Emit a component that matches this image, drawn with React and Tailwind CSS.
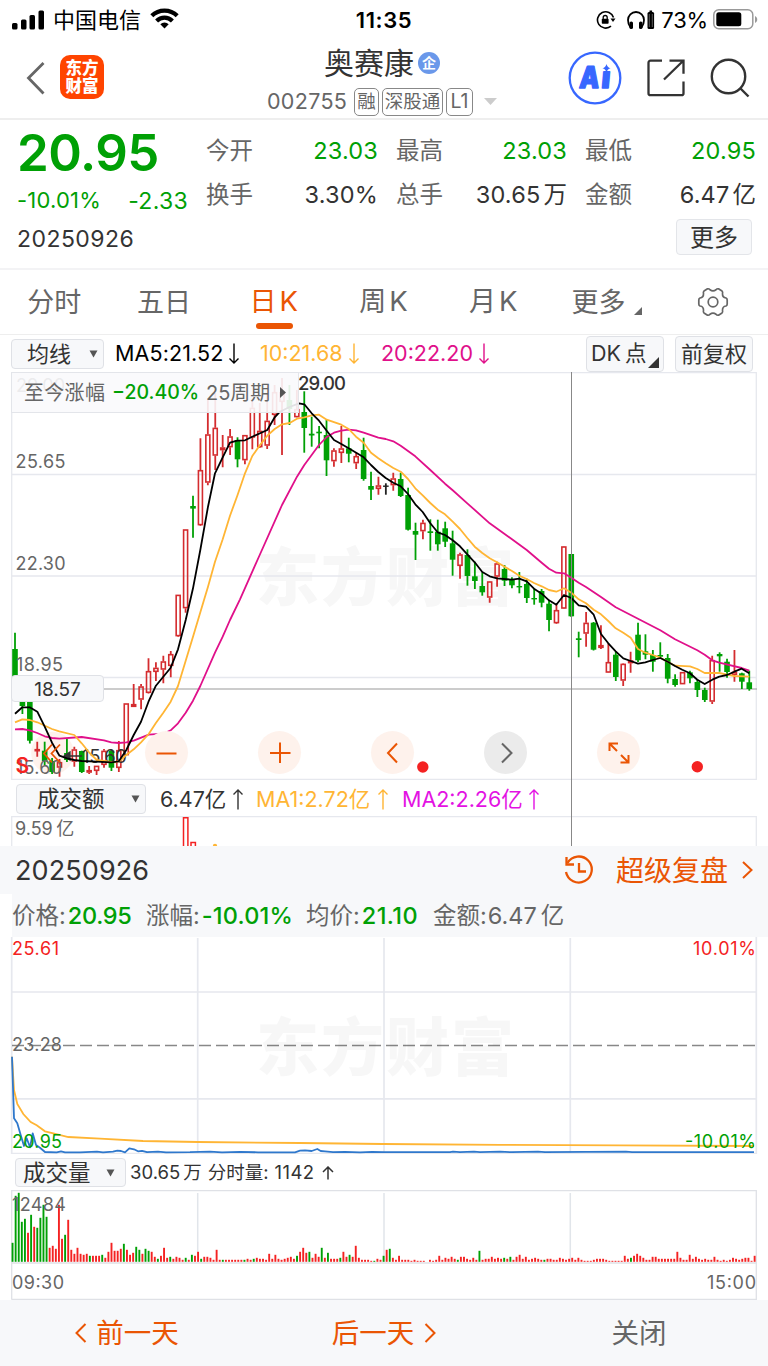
import React from 'react';

// [dir, high, bodyTop, bodyBottom, low]
const candles = [
  ['g', 632.7, 649, 680, 682], ['g', 690, 692, 706, 714], ['g', 690, 695, 740.7, 743.5], ['r', 741.7, 749, 751, 756.7],
  ['g', 741.7, 750.7, 761, 765], ['g', 758, 761, 772, 774], ['r', 759, 762, 767.7, 776.7], ['g', 739, 753, 760, 762],
  ['r', 746.7, 749.3, 761.7, 766.7], ['g', 750.7, 751, 772, 773], ['r', 766, 770, 772.7, 774], ['r', 765.7, 765.7, 771, 775],
  ['r', 749, 750.7, 765, 767.7], ['g', 749.5, 750.7, 767.7, 771], ['r', 741, 750, 768, 772], ['r', 703.3, 703.3, 755.3, 755.3],
  ['r', 684, 704, 707, 707], ['r', 684, 686.3, 699.7, 709.3], ['r', 658.3, 671, 693, 693.5], ['r', 662.3, 667.7, 672, 681],
  ['r', 655.7, 661.3, 669.7, 683.3], ['r', 651, 654, 666, 677.3], ['r', 594.7, 594.7, 636.3, 637], ['r', 529.3, 529.3, 608.3, 612.7],
  ['g', 495.7, 506, 508.6, 537.7], ['r', 438.3, 470, 525.3, 526], ['r', 398, 434.3, 482.7, 485.3], ['r', 393, 427.7, 455.7, 470],
  ['r', 435, 447.3, 450.3, 467.3], ['r', 429, 436.3, 447.3, 455], ['g', 437.3, 440, 459.3, 467.3], ['r', 435, 435, 460.3, 464.3],
  ['r', 400, 407.7, 437.7, 449.3], ['r', 403, 430.7, 447.3, 448], ['r', 393, 420.7, 445.7, 449], ['r', 385, 392, 415, 425],
  ['r', 378, 392, 402, 455], ['g', 385, 400, 409, 425], ['r', 390, 409, 417.3, 417.5], ['g', 391.3, 412, 428, 452.7],
  ['g', 416.7, 433.7, 435.5, 446.7], ['g', 426, 431.7, 433.3, 448.3], ['g', 420, 435, 460.3, 476], ['r', 448.3, 450.3, 461.3, 466.7],
  ['r', 426, 448.3, 453, 463], ['g', 437.7, 448.3, 453.7, 462.3], ['r', 452.3, 456, 463.3, 469], ['g', 437.7, 450, 479, 480.7],
  ['g', 471.7, 486, 489.7, 500], ['r', 476.7, 485.3, 489, 494.7], ['k', 483.3, 485.5, 486.5, 494.7], ['r', 472.7, 478.3, 485.3, 490.7],
  ['g', 472.7, 479, 496, 497], ['g', 487.7, 495, 529.7, 530.5], ['g', 522.7, 531, 534.7, 560], ['r', 519.7, 522.7, 531.3, 539.3],
  ['g', 519.3, 531.3, 533, 550.7], ['g', 519.7, 531.7, 544.3, 550.7], ['g', 521.7, 528.3, 541.7, 547], ['g', 530.7, 543.3, 559.7, 575.7],
  ['r', 552.7, 554.3, 566, 578.7], ['g', 549.3, 555, 576, 585.7], ['g', 561.7, 576.3, 581, 589], ['g', 572.3, 586, 592.3, 595.7],
  ['r', 581, 581.3, 597.7, 602.7], ['r', 561.7, 563.3, 576.7, 586.7], ['g', 565, 569, 580.7, 586], ['g', 577.3, 579.7, 585.3, 588.3],
  ['g', 572, 586, 587.3, 593.3], ['g', 578.7, 584, 598, 603], ['g', 588.3, 598, 599.3, 604.7], ['g', 589, 591, 602.7, 607.3],
  ['g', 600, 603.7, 620, 631.3], ['r', 604, 610, 623.3, 624], ['r', 546, 546.3, 608.7, 609], ['g', 554, 554, 616.3, 617],
  ['g', 631.7, 638.3, 640, 657.3], ['r', 612, 622.7, 633.7, 646.7], ['g', 622, 622.7, 649.7, 650.5], ['r', 625.3, 645, 648, 649],
  ['r', 643.3, 662, 672.7, 673], ['g', 651.7, 654.7, 677, 681], ['r', 663.3, 663.7, 680.7, 686], ['r', 651.7, 660.3, 663.3, 672.7],
  ['g', 622.7, 634.7, 660.3, 662], ['g', 634.3, 651.3, 654.7, 659.3], ['g', 650, 655, 661.7, 671.7], ['g', 642.3, 655, 656.7, 658],
  ['g', 654, 658, 678.7, 683.3], ['g', 674.3, 679, 685, 686.7], ['r', 672, 672, 684.3, 684.3], ['g', 670.7, 672.3, 678.3, 683.3],
  ['g', 679.3, 682, 690, 697], ['g', 687.7, 690, 700, 702], ['r', 655.7, 660, 701.7, 704], ['g', 652.3, 654, 656.3, 671.7],
  ['g', 658.7, 661.7, 672, 677.7], ['r', 650, 671.7, 675, 681.7], ['g', 672.7, 673.3, 681.7, 689], ['g', 670.7, 682.3, 689, 690.7],
];

const ma5 = '15,713.7 22.3,707.3 29.7,707.3 37.3,711.7 44.7,726.7 52,742.7 59.5,755.7 67,758.3 74.3,760 81.7,761 96.7,761.7 111.3,762.3 118.8,761.3 126.3,750 133.7,735 141,721.7 148.5,701.7 155.9,685.7 163.3,676.7 170.7,667.7 178,649.3 185.7,620 193,588.3 200.3,550 208,506.7 215,473.3 222.7,457.3 230,442.7 237.3,440.7 245,440.3 252.3,436.7 267.3,430 274.7,417.3 280,411.7 289.5,407 299,403.3 304.3,404.3 311.7,413.3 319,420.7 326.7,430.7 334,440 341.3,444 348.7,448.3 363.7,457.3 371,465 378.3,472 385.7,478 393.3,482.7 400.7,486.3 408,494 415.3,504.3 422.7,512 430.3,523.3 437.7,532.3 445,535 452.7,540.3 460,546.3 467.3,554.3 474.7,562.3 482.3,572 489.7,576.3 497,578.3 512,579.7 519.3,578.7 526.7,581.3 534,588.7 541.7,593.7 549,600.3 556.3,604.7 564,595 571.3,598 578.7,605.3 586,606.7 593.7,614.7 601,634 608.3,643.3 615.7,651.3 623.3,658.3 630.7,661 638,663.7 645.3,662.3 652.7,660 660.3,658 667.7,661.7 675,666 682.3,669.7 690,673.3 697.3,679.7 704.7,684 712.3,679.7 719.3,676.7 727,675 734.3,671.7 741.7,668.7 749.3,673.3';
const ma10 = '15,722.3 22.3,719.3 29.7,720 37.3,722.3 52,729 59.3,731.3 74.3,735 81.7,743.3 89,752.3 96.7,760 104,761 115,762.3 120,760.7 126.3,755 133.7,749.3 141,742.3 148.7,734 155.7,723.3 163.3,712.7 170.7,701.7 178,686 185.7,660.7 193,636.7 204,600 208,586.7 215,561.7 222.7,539.3 230,515.7 237.3,495.7 245,473.3 252.3,456 260,445 267.3,435.7 274.7,429 282,424.3 289.7,423 297,418.7 304.3,417.3 311.7,415.3 319,414.7 326.7,419.7 341.3,424.7 348.7,429 356,436.7 363.7,442.7 371,452.7 378.3,458.3 385.7,463.3 393.3,468 400.7,471.7 408,479 415.3,488.3 422.7,495.3 430.3,503 437.7,509.7 445,514.3 452.7,521.7 460,529 467.3,538 474.7,546.7 482.3,553 489.7,558.3 497,562.3 512,571 519.3,575.7 526.7,579 534,583 541.7,586.3 549,590 556.3,591.7 564,588.3 571.3,592.7 578.7,599.3 586,603.3 593.7,609.7 601,614.3 608.3,621 615.7,628.3 623.3,632.7 630.7,637.7 638,649 645.3,652.7 652.7,655 660.3,657.7 667.7,661.7 675,665.7 690,666.3 697.3,669 704.7,673 719.3,673 727,674.7 734.3,676 749.3,676.7';
const ma20 = '15,729.3 22.3,729 29.7,730.3 37.3,733 44.7,736.3 52,738 59.3,738.7 81.7,737 104,740.3 111.3,742.3 118.7,743 126.3,742.3 133.7,740.7 148.7,734.7 163.3,733.7 170.7,730.3 178,723.3 185.7,712.7 193,700.7 200.3,686 215,652.7 222.7,636.7 230,620 240,599.3 259.7,555 282,505 297,476.7 304.3,465 319,445 326.7,437 334,432.7 341.3,430.7 348.7,429.7 356,430.3 363.7,432.7 378.3,437.7 385.7,439 393.3,441.3 400.7,445.7 415.3,456.3 430.3,470 445,483.7 452.7,490.3 467.3,503.3 489.7,523.3 512,539.3 526.7,550 541.7,562.7 549,568.7 556.3,572.7 564,573.3 571.3,577.7 578.7,582.7 586,587 601,597 615.7,607.3 638,618.7 660.3,630.3 675,639.3 697.3,650.3 704.7,654.7 712.3,660.3 719.3,662.7 741.7,668 749.3,670.7';

const priceLine = '12,1056.7 14,1118.3 17.3,1123.3 20.7,1135 24,1146 26.7,1138.3 30,1147.3 32.7,1133.3 36,1145 40,1147.7 45,1152 56.7,1152.3 61,1151.3 65,1152.3 80,1152.3 97,1151.7 103,1152.3 113,1151.7 117.3,1150.7 121,1151 125,1152.3 129.3,1148.3 134,1149.3 138,1151.3 142,1150.8 147,1152.2 158,1151.6 166,1152.3 190,1152.2 210,1151.6 222,1152.3 240,1151.8 258,1152.3 295,1152.3 300,1150.7 305,1150.3 311.7,1151 317.3,1149 320.7,1151 325,1151.3 333,1152.2 345,1151.8 360,1152.3 372,1151.9 384,1152.2 450,1152.2 453,1151.6 460,1152.2 474,1151.7 480,1152.2 500,1151.7 512,1152.2 538,1151.6 545,1152.2 626,1151.7 632,1152.2 754,1152.2';
const avgLine = '12,1056.7 14,1090 17.3,1104 23.3,1114 30.7,1122 36.7,1125.3 45,1131.3 53.3,1133.3 68.3,1137 100,1138.7 143,1141 197.7,1142 300,1143 383,1144 500,1144.8 620,1145.3 754,1146';

// per-minute volume, negative = down tick
const volumes = [
  -19, -66, -69, -40, -43, 29, -47, 35, -34, -44, -57, -45, 14, 16, 13, 57, 23, -27, 42, 12,
  8, 14, 8, 7, 8, -6, 6, 6, 6, -7, 4, 10, 19, 11, 11, 13, -18, 12, 7, 9,
  -15, -12, 8, -13, -11, 10, 5, -3, 6, 14, 4, -5, 3, 5, 4, 2, -4, 2, -7, 6,
  10, -3, 5, 5, 4, 2, 12, 2, -2, 2, 2, 2, 2, 2, 2, -2, 3, 2, -3, 4,
  3, 3, 2, 8, 3, 7, 3, 2, 3, 4, 5, 3, -6, 10, 14, 9, -10, 4, 8, 5,
  -14, 4, -9, 3, 3, 3, -4, 10, 5, -7, 5, 16, 4, 2, 2, 2, 1, -1, 3, 2,
  -6, 12, -13, 4, 2, 6, 2, 2, 2, 1, 2, 1, 1, 1, 0, 2, 1, 2, 6, 2,
  4, 3, 5, 3, -2, 5, 5, 3, 2, 4, 2, -11, 2, 3, 3, 5, 3, 4, 3, -4,
  3, -5, 2, 5, 7, 3, 5, 2, 3, 4, 3, 2, -2, 3, 3, 2, 2, 4, 3, 2,
  3, 4, 2, 4, 2, 1, 1, 1, 2, 3, 3, 3, 2, 1, 1, 1, 1, 1, 6, 3,
  -4, 6, 8, 6, 4, 2, 2, 5, 5, 3, 3, 3, 3, 3, 3, 10, 4, 2, 2, 7,
  3, 5, 3, 2, 3, 2, 2, 5, 2, 1, 2, 1, 2, 4, 3, 2, 3, 4, 4, 1, 6,
];

const stroke = { r: '#d42c2f', g: '#00a005', k: '#222' };

const quotes = [
  ['今开', '23.03', '', true], ['最高', '23.03', '', true], ['最低', '20.95', '', true],
  ['换手', '3.30%', '', false], ['总手', '30.65', '万', false], ['金额', '6.47', '亿', false],
];

const tabs = ['分时', '五日', '日K', '周K', '月K', '更多'];

function Arrow({ up, className }) {
  return (
    <svg width="12" height="22" viewBox="0 0 12 22" className={className} fill="none" stroke="currentColor" strokeWidth="1.4">
      {up ? <path d="M6 21.5V2M1.500 6.500L6 2l4.500 4.500" /> : <path d="M6 .5V20M1.500 15.500L6 20l4.500-4.500" />}
    </svg>
  );
}

function Caret({ className }) {
  return (
    <svg width="9" height="8" viewBox="0 0 9 8" className={className}>
      <path d="M.5 .5h8L4.5 7.5z" fill="#555" />
    </svg>
  );
}

function StatusBar() {
  return (
    <div className="relative flex h-10 items-center text-black">
      <svg width="32" height="20" viewBox="0 0 32 20" className="ml-3 -mt-px">
        <rect x="0" y="13" width="5.5" height="6.5" rx="1.5" />
        <rect x="9" y="9.500" width="5.5" height="10" rx="1.5" />
        <rect x="17.500" y="5" width="5.500" height="14.500" rx="1.5" />
        <rect x="26.500" y="0.500" width="5.500" height="19" rx="1.5" />
      </svg>
      <span className="ml-[9px] text-[22px] leading-6">中国电信</span>
      <svg width="29" height="21" viewBox="0 0 29 21" className="ml-[9px] -mt-[3px]" fill="none" stroke="#000" strokeWidth="4.200">
        <path d="M1.800 7.800a18 18 0 0 1 25.400 0" />
        <path d="M6.600 12.900a11.200 11.200 0 0 1 15.800 0" />
        <path d="M14.500 20.500l-4.200-4.200a6 6 0 0 1 8.400 0z" fill="#000" stroke="none" />
      </svg>
      <span className="absolute inset-x-0 text-center text-[22px] font-semibold leading-6 tracking-[0.6px]">11:35</span>
      <div className="ml-auto mr-[10px] flex items-center">
        <svg width="20" height="20" viewBox="0 0 20 20" fill="none" stroke="#000" strokeWidth="1.600">
          <path d="M17.500 7.500A8.200 8.200 0 1 0 15 16.200" />
          <path d="M14.500 8.500h5l-2.500 3.500z" fill="#000" stroke="none" />
          <rect x="5.800" y="8.800" width="6.800" height="5" rx="0.800" fill="#000" stroke="none" />
          <path d="M7.200 9V7.500a2 2 0 0 1 4 0V9" strokeWidth="1.300" />
        </svg>
        <svg width="18" height="20" viewBox="0 0 18 20" className="ml-[11px]">
          <path d="M3.500 17.500C1.500 15 1 12.500 1 10a8 8 0 0 1 16 0c0 2.500-.5 5-2.500 7.500" fill="none" stroke="#000" strokeWidth="1.800" />
          <rect x="2.500" y="11.500" width="3.500" height="7.500" rx="1.600" />
          <rect x="12" y="11.500" width="3.500" height="7.500" rx="1.600" />
        </svg>
        <svg width="8" height="20" viewBox="0 0 8 20" className="ml-[2px]">
          <rect x="0.500" y="2" width="6.600" height="17" rx="1.500" />
          <rect x="2.500" y="0.500" width="2.600" height="2" />
          <path d="M2.300 4v13M5.300 4v13" stroke="#999" strokeWidth="0.600" />
        </svg>
        <span className="ml-[6px] text-[22px] leading-6 tracking-[-0.2px]">73%</span>
        <svg width="45" height="21" viewBox="0 0 45 21" className="-mt-[2px] ml-[5px]">
          <rect x="0.800" y="0.800" width="39" height="19" rx="5" fill="none" stroke="#999" strokeWidth="1.500" />
          <rect x="3.300" y="3.300" width="25" height="14" rx="2.500" />
          <path d="M42 7v7c3-1.500 3-5.500 0-7z" fill="#999" />
        </svg>
      </div>
    </div>
  );
}

function Header() {
  return (
    <div className="relative flex h-20 border-b-2 border-[#eeeeee]">
      <svg width="20" height="34" viewBox="0 0 20 34" className="ml-[25px] mt-[21px]" fill="none" stroke="#666" strokeWidth="2.800">
        <path d="M18.500 2L3.500 17l15 15.500" />
      </svg>
      <div className="ml-[15px] mt-[15px] flex h-11 w-11 flex-col items-center justify-center rounded-[10px] bg-[#ff4400] pb-px text-[16.500px] font-black leading-[18px] text-white">
        <span>东方</span>
        <span>财富</span>
      </div>
      <div className="absolute left-[267px] top-0 w-[232px]">
        <div className="mt-[7px] flex h-8 items-center pl-[57px] text-[30px] leading-8 text-[#333]">
          奥赛康
          <span className="ml-[4px] flex h-[22px] w-[22px] items-center justify-center rounded-full bg-[#6a98ea] text-[14px] font-bold leading-none text-white">企</span>
        </div>
        <div className="mt-[8px] flex h-[29px] items-center text-[#666]">
          <span className="w-[80px] text-[21.500px] leading-none tracking-[0.3px]">002755</span>
          <span className="ml-[7px] flex h-7 w-[25px] items-center justify-center rounded-[5px] border border-[#888] text-[18.500px] leading-none">融</span>
          <span className="ml-[3px] flex h-7 w-[61px] items-center justify-center rounded-[5px] border border-[#888] text-[18.500px] leading-none">深股通</span>
          <span className="ml-[3px] flex h-7 w-[27px] items-center justify-center rounded-[5px] border border-[#888] text-[19.500px] leading-none">L1</span>
          <svg width="13" height="7" viewBox="0 0 13 7" className="ml-[11px]">
            <path d="M0 0h13L6.500 7z" fill="#ccc" />
          </svg>
        </div>
      </div>
      <div className="ml-auto mr-[18px] flex">
        <svg width="54" height="54" viewBox="0 0 54 54" className="mt-[11px]">
          <circle cx="27" cy="27" r="25.300" fill="none" stroke="#3767ff" strokeWidth="2.300" />
          <g fill="#3767ff" stroke="#3767ff" strokeWidth="1.400" strokeLinejoin="round" fontWeight="900" fontSize="30">
            <text x="11" y="37" transform="skewX(-5) translate(3 0)" textLength="20" lengthAdjust="spacingAndGlyphs">A</text>
            <text x="33" y="37" transform="skewX(-5) translate(3 0)">ı</text>
          </g>
          <path d="M38.500 13q.8 3.500 4 4.200-3.200.8-4 4.200-.8-3.400-4-4.200 3.200-.7 4-4.200z" fill="#3767ff" />
        </svg>
        <svg width="38" height="38" viewBox="0 0 38 38" className="ml-[25px] mt-[19px]" fill="none" stroke="#333" strokeWidth="2.300">
          <path d="M15 1.700H3.500a2 2 0 0 0-2 2v30.500a2 2 0 0 0 2 2h31a2 2 0 0 0 2-2V22.500M22.500 1.700h14v13M36 2L17 20.500" />
        </svg>
        <svg width="40" height="40" viewBox="0 0 40 40" className="ml-[25px] mt-[18px]" fill="none" stroke="#333" strokeWidth="2.400">
          <circle cx="18.500" cy="18.500" r="16.700" />
          <path d="M30 30l8.500 8.500" />
        </svg>
      </div>
    </div>
  );
}

function QuotePanel() {
  return (
    <div className="flex h-[150px] border-b-2 border-[#f3f3f5] pl-[17px] pr-3">
      <div className="w-[189px]">
        <div className="mt-2 text-[51px] font-semibold leading-[50px] tracking-[-0.5px] text-[#00a005]">20.95</div>
        <div className="mt-[10px] flex w-[171px] justify-between text-[22px] leading-6 text-[#00a005]">
          <span className="tracking-[0.2px]">-10.01%</span>
          <span className="pt-px text-[23px] tracking-[0.3px]">-2.33</span>
        </div>
        <div className="mt-[14px] text-[23px] leading-6 tracking-[0.45px] text-[#333]">20250926</div>
      </div>
      <div className="flex-1">
        <div className="mt-2 grid grid-cols-[172px_171px_171px] gap-x-[18px]">
          {quotes.map(([label, value, unit, down]) => (
            <div key={label} className="flex h-[44px] items-center justify-between pt-px text-[23.500px] leading-6">
              <span className="text-[#666]">{label}</span>
              <span className={down ? 'text-[#00a005]' : 'text-[#333]'}>
                <span className="tracking-[0.2px]">{value}</span>
                {unit && <span className="ml-[3px]">{unit}</span>}
              </span>
            </div>
          ))}
        </div>
        <button className="ml-auto mr-[4px] mt-[3px] flex h-9 w-[76px] items-center justify-center rounded border border-[#e3e5e9] bg-[#f7f8fa] pt-[2px] text-[24px] leading-none text-[#333]">
          更多
        </button>
      </div>
    </div>
  );
}

function Tabs() {
  return (
    <div className="grid h-[65px] grid-cols-7 border-b border-[#eee] text-[27px] text-[#666]">
      {tabs.map((t) => (
        <div key={t} className={`relative flex items-center justify-center leading-none ${t === '日K' ? 'text-[#ea5504]' : ''}`}>
          <span className={t === '更多' ? '-ml-[10px]' : '-ml-px'}>
            {t[0]}
            {t[1] === 'K' ? <span className="ml-[3px] text-[27.500px]">K</span> : t[1]}
          </span>
          {t === '日K' && <span className="absolute bottom-[5px] h-[6px] w-[37px] rounded-full bg-[#ea5504]" />}
          {t === '更多' && (
            <svg width="8" height="8" viewBox="0 0 8 8" className="absolute bottom-[19px] right-[16px]">
              <path d="M8 0v8H0z" fill="#666" />
            </svg>
          )}
        </div>
      ))}
      <div className="flex items-center justify-center">
        <svg width="32" height="30" viewBox="-16 -15 32 30" className="-mt-px" fill="none" stroke="#666" strokeWidth="1.700" strokeLinejoin="round">
          <path d="M-5.500-13.200Q-4-13.500-3-12.200Q0-10 3-12.200Q4-13.500 5.500-13.200L9-11Q10-10 9.500-8.500Q9.300-4.500 13-4Q14.200-3.500 14.200-2V2Q14.200 3.500 13 4Q9.300 4.500 9.500 8.500Q10 10 9 11L5.500 13.200Q4 13.500 3 12.200Q0 10-3 12.200Q-4 13.500-5.500 13.200L-9 11Q-10 10-9.500 8.500Q-9.300 4.500-13 4Q-14.200 3.500-14.200 2V-2Q-14.200-3.500-13-4Q-9.300-4.500-9.500-8.500Q-10-10-9-11Z" />
          <circle r="4.800" />
        </svg>
      </div>
    </div>
  );
}

function IndicatorRow() {
  return (
    <div className="flex h-[37px] items-center pl-[11px] pr-[15px] text-[21.500px] leading-none">
      <div className="flex h-[30px] w-[93px] items-center rounded border border-[#dfe1e6] bg-[#f7f8fa] pl-[15px] text-[22px] text-[#333]">
        均线
        <Caret className="ml-[18px]" />
      </div>
      <span className="ml-[11px] w-[109px] tracking-[0.1px] text-black">MA5:21.52</span>
      <Arrow className="ml-[4px] text-black" />
      <span className="ml-[20px] w-[83px] text-[#ffb534]">10:21.68</span>
      <Arrow className="ml-[5px] text-[#ffb534]" />
      <span className="ml-[21px] w-[91px] text-[#e0108a]">20:22.20</span>
      <Arrow className="ml-[6px] text-[#e0108a]" />
      <div className="relative ml-auto flex h-9 w-[78px] items-center rounded border border-[#dfe1e6] bg-[#f7f8fa] pl-[4px] text-[#333]">
        DK<span className="ml-[4px]">点</span>
        <svg width="11" height="11" viewBox="0 0 11 11" className="absolute bottom-[3px] right-[4px]">
          <path d="M11 0v11H0z" fill="#333" />
        </svg>
      </div>
      <div className="ml-[11px] flex h-9 w-[78px] items-center justify-center rounded border border-[#dfe1e6] bg-[#f7f8fa] text-[22px] text-[#333]">前复权</div>
    </div>
  );
}

function RoundButton({ gray, children }) {
  return (
    <button className={`flex h-[43px] w-[43px] items-center justify-center rounded-full ${gray ? 'bg-[#ebebeb] text-[#666]' : 'bg-[#fef2ec] text-[#ea5504]'}`}>
      <svg width="24" height="24" viewBox="-12 -12 24 24" fill="none" stroke="currentColor" strokeWidth="2">
        {children}
      </svg>
    </button>
  );
}

function KChart() {
  return (
    <div className="relative h-[408px]">
      <svg width="768" height="408" viewBox="0 372 768 408" className="block">
        <text x="256" y="600" fontSize="63" fontWeight="900" fill="#f7f7f7" textLength="258">东方财富</text>
        <g stroke="#e6e8ee" strokeWidth="1.300">
          <path d="M11.500 372.600H756.500M11.500 474.500H756.500M11.500 576H756.500M11.500 677.500H756.500M11.500 779.500H756.500M11.700 372V780M756.300 372V780" />
        </g>
        <path d="M12 689H757" stroke="#999" strokeWidth="1.200" />
        <circle cx="52.500" cy="753" r="21.300" fill="#fef2ec" />
        {candles.map(([dir, high, top, bottom, low], i) => {
          const x = 15 + i * 7.417;
          const c = stroke[dir];
          if (dir === 'r') {
            return (
              <g key={i} stroke={c} strokeWidth="1.800" fill="none">
                <path d={`M${x} ${high}V${top}M${x} ${bottom}V${low}`} />
                <rect x={x - 2} y={top + 0.7} width="4" height={Math.max(bottom - top - 1.4, 1)} strokeWidth="1.600" />
              </g>
            );
          }
          return (
            <g key={i}>
              <path d={`M${x} ${high}V${low}`} stroke={c} strokeWidth="1.800" />
              <rect x={x - 2.8} y={top} width="5.600" height={Math.max(bottom - top, 1.4)} fill={c} />
            </g>
          );
        })}
        <g fontSize="18" fill="#666">
          <text x="16" y="391.700" textLength="49">29.00</text>
          <text x="15.500" y="467.500" textLength="50">25.65</text>
          <text x="15.500" y="569.500" textLength="50">22.30</text>
          <text x="16" y="671.300" textLength="47">18.95</text>
          <text x="16" y="773.700" textLength="46">15.60</text>
        </g>
        <path d="M64 756h18M64 756l6-4v8z" stroke="#333" strokeWidth="1.300" fill="#333" />
        <text x="82" y="762.500" fontSize="18.500" fill="#333" textLength="45">15.60</text>
        <g fill="none" strokeWidth="1.800" strokeLinejoin="round">
          <polyline points={ma20} stroke="#e0108a" />
          <polyline points={ma10} stroke="#ffb534" />
          <polyline points={ma5} stroke="#000" />
        </g>
        <path d="M52 744.500l-8 9 8 9M60 744.500l-8.500 9 8.500 9" fill="none" stroke="#ea5504" strokeWidth="1.800" />
        <text x="15.500" y="772.500" fontSize="21" fontWeight="600" fill="#f42222">S</text>
        <circle cx="422.800" cy="767" r="5.700" fill="#f42222" />
        <circle cx="697.300" cy="766.800" r="5.700" fill="#f42222" />
        <text x="298" y="389.700" fontSize="18.500" fontWeight="500" fill="#333" textLength="48">29.00</text>
      </svg>
      <div className="absolute left-[11px] top-0 flex h-[41px] w-[288px] items-center border border-[#e3e5ea] bg-[#f9f9fc]/90 pl-[12px] text-[20px] leading-none text-[#666]">
        <span className="w-[81px] whitespace-nowrap tracking-[0.3px]">至今涨幅</span>
        <span className="ml-[7px] w-[86px] text-[19.500px] font-medium text-[#00a005]">−20.40%</span>
        <span className="ml-[8px] whitespace-nowrap">25周期</span>
        <svg width="6" height="11" viewBox="0 0 6 11" className="ml-[10px]">
          <path d="M0 0l6 5.500L0 11z" fill="#555" />
        </svg>
      </div>
      <div className="absolute left-[11px] top-[303px] flex h-[27px] w-[93px] items-center justify-center rounded border border-[#dfe1e6] bg-[#f7f8fa] pt-[2px] text-[19px] leading-none text-[#333]">18.57</div>
      <div className="absolute left-[145px] top-[359px] flex gap-[70px]">
        <RoundButton><path d="M-10.500 .5H9.500" /></RoundButton>
        <RoundButton><path d="M-10 0H10.500M0-10.500V10" /></RoundButton>
        <RoundButton><path d="M4-9.500L-5 0l9 9.500" /></RoundButton>
        <RoundButton gray><path d="M-4-9.500L5.500 0l-9.500 9.500" /></RoundButton>
        <RoundButton><path d="M-9.500-2v-7.500H-1M-9.500-9.500L-2-2M1.500 9.500h8V2M9.500 9.500L2 2" /></RoundButton>
      </div>
    </div>
  );
}

function AmountRow() {
  return (
    <div className="flex h-[36px] items-center pl-[16px] pt-[2px] text-[21.500px] leading-none">
      <div className="flex h-[30px] w-[130px] items-center rounded border border-[#dfe1e6] bg-[#f7f8fa] pl-[20px] text-[22.500px] text-[#333]">
        成交额
        <Caret className="ml-[26px]" />
      </div>
      <span className="ml-[14px] w-[68px] whitespace-nowrap pt-px text-[#333]">6.47亿</span>
      <Arrow up className="ml-[4px] text-[#333]" />
      <span className="ml-[12px] w-[118px] whitespace-nowrap pt-px text-[#ffb534]">MA1:2.72亿</span>
      <Arrow up className="ml-[3px] text-[#ffb534]" />
      <span className="ml-[13px] w-[124px] whitespace-nowrap pt-px text-[#e312e3]">MA2:2.26亿</span>
      <Arrow up className="ml-[2px] text-[#e312e3]" />
    </div>
  );
}

function AmountChart() {
  return (
    <svg width="768" height="30" viewBox="0 816 768 30" className="block">
      <path d="M11.700 846V816.700H756.300V846" fill="none" stroke="#e6e8ee" strokeWidth="1.300" />
      <text x="15" y="835" fontSize="18" fill="#666">9.59<tspan dx="3.500">亿</tspan></text>
      <g fill="none" stroke="#f42222" strokeWidth="1.500">
        <path d="M183.500 847V817.800h4.400V847M191 847v-4.500h4.400V847" />
      </g>
      <circle cx="215" cy="846" r="2.200" fill="#ffb534" />
    </svg>
  );
}

function ReplayHeader() {
  return (
    <div className="flex h-[48px] items-center bg-[#f7f8fa] pl-[15px] pr-[15px]">
      <span className="text-[27px] leading-none tracking-[0.1px] text-[#333]">20250926</span>
      <div className="ml-auto flex items-center text-[#ea5504]">
        <svg width="32" height="30" viewBox="0 0 32 30" fill="none" stroke="currentColor" strokeWidth="2.300">
          <path d="M4.500 8A13 13 0 1 1 3 17" />
          <path d="M3.500 2v7.500H11" />
          <path d="M16 8v8.500h7" />
        </svg>
        <span className="ml-[21px] pt-[2px] text-[28px] leading-none">超级复盘</span>
        <svg width="11" height="18" viewBox="0 0 11 18" className="ml-[14px]" fill="none" stroke="currentColor" strokeWidth="2">
          <path d="M1 1l8.500 8L1 17" />
        </svg>
      </div>
    </div>
  );
}

function StatsRow() {
  return (
    <div className="ml-3 flex h-[43px] items-center whitespace-nowrap bg-[#f7f8fa] pt-px text-[23.500px] leading-none text-[#666]">
      <span className="w-[134px]">价格:<span className="ml-[2px] font-medium tracking-[-0.3px] text-[#00a005]">20.95</span></span>
      <span className="w-[160px]">涨幅:<span className="ml-[2px] font-medium tracking-[0.2px] text-[#00a005]">-10.01%</span></span>
      <span className="w-[127px]">均价:<span className="ml-[2px] font-medium tracking-[0.4px] text-[#00a005]">21.10</span></span>
      <span>金额:<span className="ml-[1px]">6.47</span><span className="ml-[4px]">亿</span></span>
    </div>
  );
}

function MinuteChart() {
  return (
    <svg width="768" height="217" viewBox="0 937 768 217" className="block">
      <path d="M11.700 937V1154.300M756.300 937V1154.300M11.500 1153.500H757M12 992H756M12 1098.800H756M197.700 938V1154M384 938V1154M570.300 938V1154" fill="none" stroke="#e6e8ee" strokeWidth="1.700" />
      <path d="M12 1045.600H756" stroke="#888" strokeWidth="1.500" strokeDasharray="12 5" />
      <text x="256" y="1070" fontSize="63" fontWeight="900" fill="#000" fillOpacity="0.032" textLength="258">东方财富</text>
      <polyline points={avgLine} fill="none" stroke="#ffb534" strokeWidth="1.800" />
      <polyline points={priceLine} fill="none" stroke="#2f78cc" strokeWidth="1.800" strokeLinejoin="round" />
      <g fontSize="18">
        <text x="12" y="954.800" fill="#f42222" textLength="47">25.61</text>
        <text x="693" y="954.800" fill="#f42222" textLength="63">10.01%</text>
        <text x="12" y="1051.300" fill="#666" textLength="50">23.28</text>
        <text x="12" y="1147.600" fill="#00a005" textLength="50">20.95</text>
        <text x="685" y="1147.600" fill="#00a005" textLength="71">-10.01%</text>
      </g>
    </svg>
  );
}

function VolumeRow() {
  return (
    <div className="flex h-[36px] items-center pl-[15px] pt-px text-[18.500px] leading-none text-[#333]">
      <div className="flex h-[29px] w-[111px] items-center rounded border border-[#dfe1e6] bg-[#f7f8fa] pl-[7px] pt-px text-[22.500px]">
        成交量
        <Caret className="ml-[15px]" />
      </div>
      <span className="ml-[4px]">30.65<span className="ml-[3px]">万</span></span>
      <span className="ml-[6px]">分时量:</span>
      <span className="ml-[6px] tracking-[0.4px]">1142</span>
      <svg width="12" height="14" viewBox="0 0 12 14" className="ml-[8px]" fill="none" stroke="currentColor" strokeWidth="1.500">
        <path d="M6 13.500V1.500M1 6l5-5 5 5" />
      </svg>
    </div>
  );
}

function VolumeChart() {
  return (
    <svg width="768" height="110" viewBox="0 1190 768 110" className="block">
      <path d="M11.700 1299.500V1190.600H756.300V1299.500M11.500 1263H757M11.500 1299.300H757" fill="none" stroke="#dfe1e6" strokeWidth="1.300" />
      <path d="M197.700 1193V1262M384 1193V1262M570.300 1193V1262" stroke="#e1e5ea" strokeWidth="1.500" />
      {volumes.map((v, i) => (
        <rect key={i} x={11.6 + i * 3.092} y={1261.8 - Math.abs(v)} width="1.900" height={Math.abs(v)} fill={v < 0 ? '#00a005' : '#f42222'} />
      ))}
      <g fontSize="18" fill="#666">
        <text x="12" y="1211" textLength="54">12484</text>
        <text x="12" y="1288.500" textLength="52">09:30</text>
        <text x="707" y="1288.500" textLength="49">15:00</text>
      </g>
    </svg>
  );
}

function Footer() {
  return (
    <div className="grid h-[66px] grid-cols-3 items-center bg-[#f7f8fa] text-[27.500px] leading-none text-[#ea5504]">
      <div className="flex items-center justify-center pr-[2px]">
        <svg width="12" height="20" viewBox="0 0 12 20" className="mr-[9px]" fill="none" stroke="currentColor" strokeWidth="2">
          <path d="M10.500 1L1.500 10l9 9" />
        </svg>
        <span className="pt-[2px]">前一天</span>
      </div>
      <div className="flex items-center justify-center">
        <span className="pt-[2px]">后一天</span>
        <svg width="12" height="20" viewBox="0 0 12 20" className="ml-[10px]" fill="none" stroke="currentColor" strokeWidth="2">
          <path d="M1.500 1l9 9-9 9" />
        </svg>
      </div>
      <div className="pr-[2px] pt-[2px] text-center text-[#666]">关闭</div>
    </div>
  );
}

export default function App() {
  return (
    <div className="h-[1366px] w-[768px] overflow-hidden bg-white font-['Inter','Noto_Sans_CJK_SC',sans-serif]">
      <StatusBar />
      <Header />
      <QuotePanel />
      <Tabs />
      <IndicatorRow />
      <div className="relative">
        <KChart />
        <AmountRow />
        <AmountChart />
        {/* crosshair runs through both charts */}
        <div className="absolute bottom-0 left-[571px] top-0 w-px bg-[#888]" />
      </div>
      <ReplayHeader />
      <StatsRow />
      <MinuteChart />
      <VolumeRow />
      <VolumeChart />
      <Footer />
    </div>
  );
}
